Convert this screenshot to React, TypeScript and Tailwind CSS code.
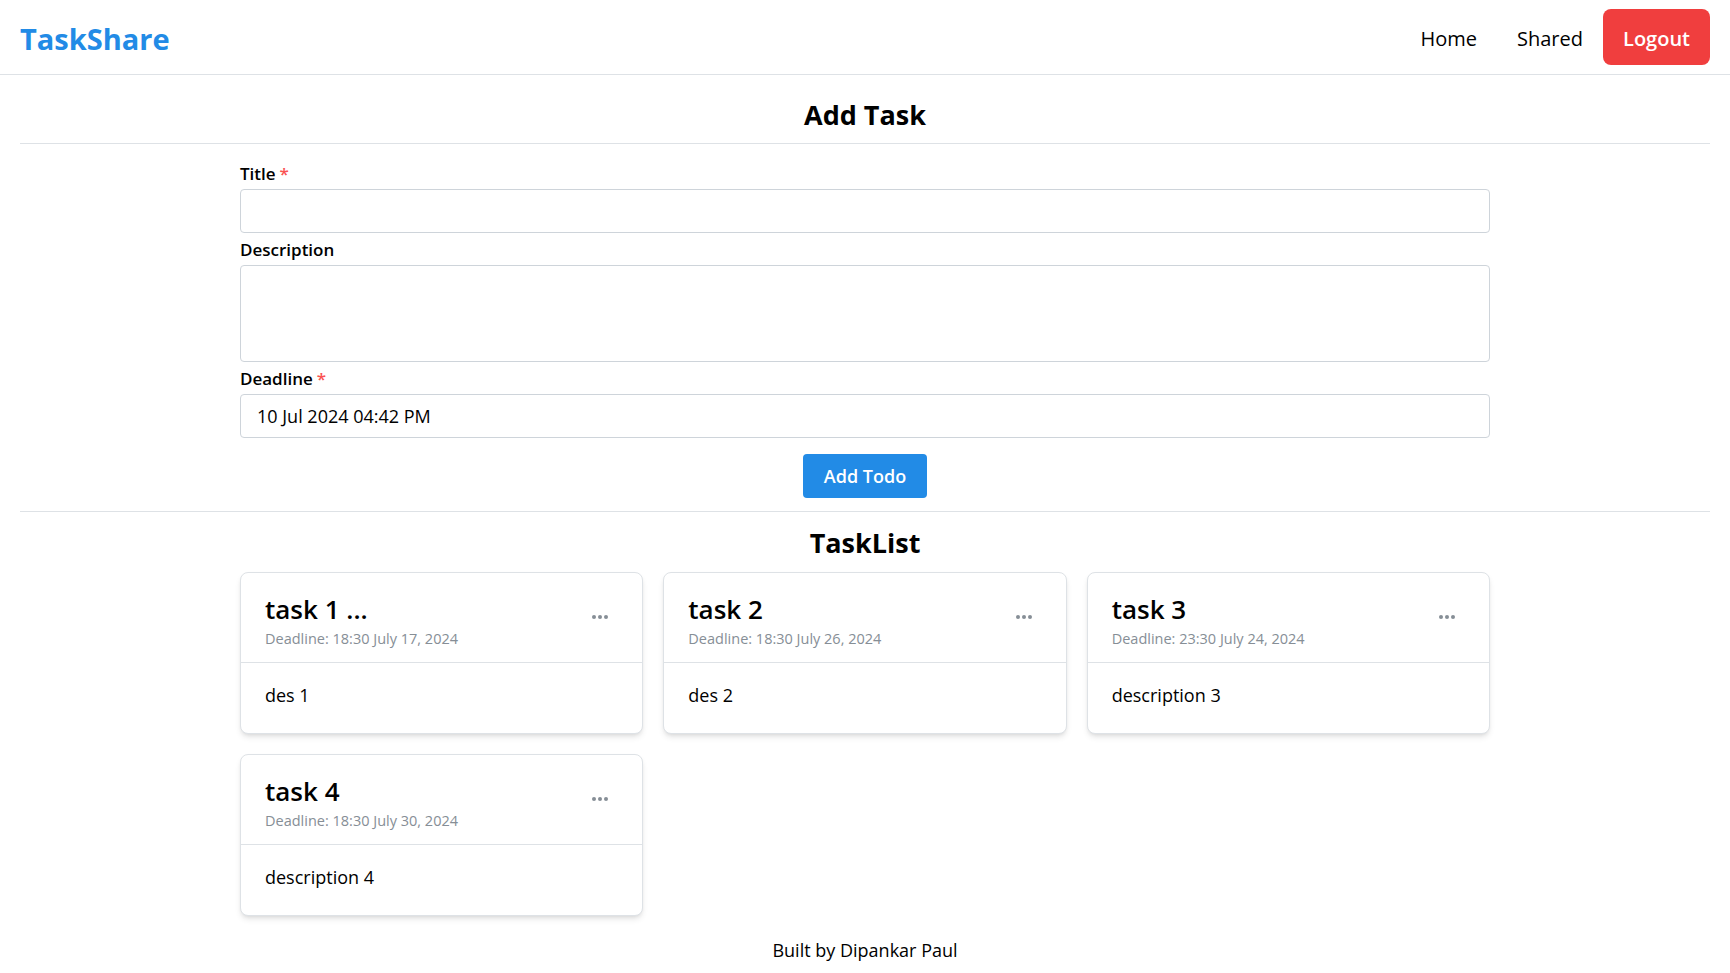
import React from "react";

type Task = { title: string; deadline: string; description: string };

const tasks: Task[] = [
  { title: "task 1 ...", deadline: "Deadline: 18:30 July 17, 2024", description: "des 1" },
  { title: "task 2", deadline: "Deadline: 18:30 July 26, 2024", description: "des 2" },
  { title: "task 3", deadline: "Deadline: 23:30 July 24, 2024", description: "description 3" },
  { title: "task 4", deadline: "Deadline: 18:30 July 30, 2024", description: "description 4" },
];

const Dots = () => (
  <svg width="16" height="4" viewBox="0 0 16 4" className="mr-[10px] mb-2">
    <circle cx="2" cy="2" r="2" fill="#868e96" />
    <circle cx="8" cy="2" r="2" fill="#868e96" />
    <circle cx="14" cy="2" r="2" fill="#868e96" />
  </svg>
);

const TaskCard = ({ task }: { task: Task }) => (
  <div className="bg-white border border-[#dee2e6] rounded-lg shadow-md">
    <div className="flex items-center justify-between px-6 pt-[20px] pb-[13px] border-b border-[#dee2e6]">
      <div>
        <h3 className="text-[26px] leading-8 font-semibold text-black">{task.title}</h3>
        <p className="mt-[4px] text-[14.5px] leading-5 text-[#868e96]">{task.deadline}</p>
      </div>
      <Dots />
    </div>
    <div className="px-6 pt-[20px] pb-[26px] text-lg leading-6 text-black">{task.description}</div>
  </div>
);

const Field = ({ label, required, children }: { label: string; required?: boolean; children: React.ReactNode }) => (
  <div className="flex flex-col">
    <label className="text-[17px] leading-7 font-semibold text-black">
      {label}
      {required && <span className="ml-1 text-[#fa5252]">*</span>}
    </label>
    <div className="mt-px">{children}</div>
  </div>
);

export default function App() {
  return (
    <div className="min-h-screen bg-white text-black" style={{ fontFamily: '"Segoe UI", "Open Sans", sans-serif' }}>
      <header className="h-[75px] flex items-center justify-between px-5 border-b border-[#dee2e6]">
        <span className="pt-1 text-[29px] font-bold text-[#228be6]">TaskShare</span>
        <nav className="flex items-center">
          <a className="px-5 pt-1 text-xl text-black">Home</a>
          <a className="px-5 pt-1 text-xl text-black">Shared</a>
          <button className="h-14 px-5 pt-1 rounded-lg bg-[#f03e3e] text-xl font-semibold text-white">Logout</button>
        </nav>
      </header>

      <main className="px-5">
        <h2 className="pt-[22px] pb-[10px] text-[27px] leading-9 font-bold text-center border-b border-[#dee2e6]">Add Task</h2>

        <div className="pt-4 pb-[13px] border-b border-[#dee2e6]">
          <form className="w-[1250px] mx-auto flex flex-col gap-[3px]">
            <Field label="Title" required>
              <input className="w-full h-[44px] px-4 border border-[#ced4da] rounded text-lg outline-none" />
            </Field>
            <Field label="Description">
              <textarea className="block w-full h-[97px] px-4 py-2 border border-[#ced4da] rounded text-lg outline-none resize-none" />
            </Field>
            <Field label="Deadline" required>
              <div className="w-full h-[44px] px-4 flex items-center border border-[#ced4da] rounded text-lg">
                10 Jul 2024 04:42 PM
              </div>
            </Field>
            <div className="mt-[13px] flex justify-center">
              <button type="button" className="w-[124px] h-[44px] rounded bg-[#228be6] text-lg font-semibold text-white">
                Add Todo
              </button>
            </div>
          </form>
        </div>

        <h2 className="pt-[13px] text-[27px] leading-9 font-bold text-center">TaskList</h2>

        <div className="w-[1250px] mx-auto mt-[11px] grid grid-cols-3 gap-5">
          {tasks.map((t) => (
            <TaskCard key={t.title} task={t} />
          ))}
        </div>

        <footer className="mt-5 pb-2 text-center text-lg leading-7">Built by Dipankar Paul</footer>
      </main>
    </div>
  );
}
